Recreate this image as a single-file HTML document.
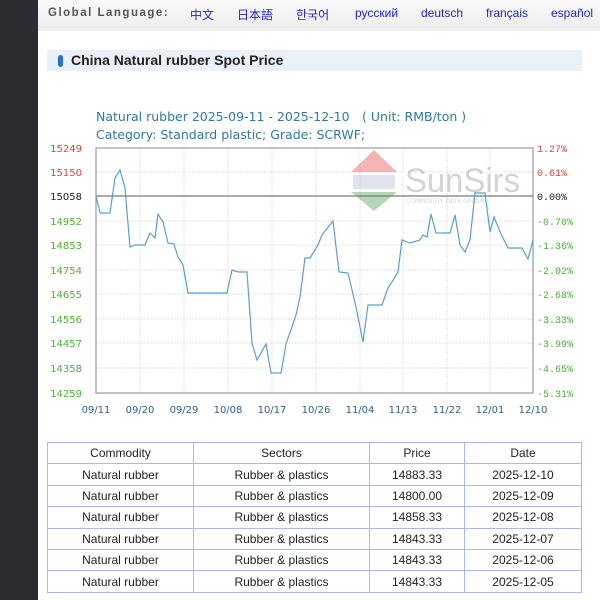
<!DOCTYPE html>
<html><head><meta charset="utf-8"><style>
*{margin:0;padding:0;box-sizing:border-box}
body{width:600px;height:600px;overflow:hidden;background:#fff;font-family:"Liberation Sans","Noto Sans CJK SC",sans-serif;position:relative}
.side{position:absolute;left:0;top:0;width:38px;height:600px;background:#2c2d33}
.top{position:absolute;left:38px;top:0;width:562px;height:31px;background:linear-gradient(#fafafa,#ececec);font-size:12px}
.top span{position:absolute;top:6px;color:#2323c8}
.top .gl{color:#555;font-weight:bold;letter-spacing:1.5px;font-size:11.5px;top:7px}
.title{position:absolute;left:47px;top:50px;width:535px;height:21px;background:#e9f0f8;font-weight:bold;font-size:14px;color:#222;padding:2px 0 0 24px}
.title i{position:absolute;left:11px;top:5px;width:5px;height:12px;border-radius:3px;background:#2a6fd8}
table{position:absolute;left:47px;top:442px;width:535px;border-collapse:collapse;font-size:12px;color:#222}
td{border:1.5px solid #aab8f0;height:21.4px;text-align:center;padding:0}
</style></head><body>
<div class="side"></div>
<div class="top">
<span class="gl" style="left:10px">Global Language:</span>
<span style="left:152px">中文</span><span style="left:199px">日本語</span><span style="left:258px">한국어</span>
<span style="left:317px">русский</span><span style="left:383px">deutsch</span><span style="left:448px">français</span><span style="left:513px">español</span>
</div>
<div class="title"><i></i>China Natural rubber Spot Price</div>
<svg style="position:absolute;left:0;top:0" width="600" height="440" font-family="DejaVu Sans,sans-serif">
<text x="96" y="121" font-size="12.5" fill="#2f7aa0">Natural rubber 2025-09-11 - 2025-12-10　( Unit: RMB/ton )</text>
<text x="96" y="139" font-size="12.5" fill="#2f7aa0">Category: Standard plastic; Grade: SCRWF;</text>
<g stroke="#e2e2e2" stroke-dasharray="2,1">
<path d="M96 172H533M96 221H533M96 245H533M96 270H533M96 294H533M96 319H533M96 343H533M96 368H533"/>
<path d="M140 148V393M184 148V393M228 148V393M272 148V393M316 148V393M360 148V393M403 148V393M447 148V393M490 148V393"/>
</g>
<g opacity="0.45">
<path d="M351 172L374 150L397 172Z" fill="#e85a5a"/>
<path d="M351 192L374 211L397 192Z" fill="#5aa85a"/>
<rect x="353" y="175" width="42" height="14" fill="#c0c4d8"/>
<text x="405" y="192" font-size="34" fill="#9aa0b0" font-family="Liberation Sans,sans-serif" textLength="115" lengthAdjust="spacingAndGlyphs">SunSirs</text>
<text x="406" y="203" font-size="6" fill="#9aa0b0">COMMODITY DATA GROUP</text>
</g>
<rect x="96" y="148" width="437" height="245" fill="none" stroke="#999" stroke-width="1.2"/>
<path d="M96 196H533" stroke="#777" stroke-width="1.2"/>
<polyline fill="none" stroke="#5a9fd0" stroke-width="1.2" points="96,196 100,213 110,213 115,178 120,170 125,188 130,247 135,245 145,245 150,233 155,238 158,214 163,222 168,243 174,244 178,257 183,265 188,293 227,293 232,270 238,272 247,272 252,343 257,360 266,344 271,373 281,373 286,344 296,315 300,297 305,258 310,258 318,245 322,235 333,221 339,272 348,273 356,307 363,342 368,305 382,305 388,288 392,282 398,272 402,240 410,243 420,240 423,235 427,237 431,214 436,233 450,233 455,215 460,245 465,252 470,240 475,193 485,193 490,232 494,217 501,234 508,248 522,248 528,259 533,240"/>
<g font-size="10" text-anchor="end">
<text x="82" y="152" fill="#e84040">15249</text><text x="82" y="176" fill="#e84040">15150</text><text x="82" y="200" fill="#222">15058</text>
<g fill="#4caf3a"><text x="82" y="225">14952</text><text x="82" y="249">14853</text><text x="82" y="274">14754</text><text x="82" y="298">14655</text><text x="82" y="323">14556</text><text x="82" y="347">14457</text><text x="82" y="372">14358</text><text x="82" y="397">14259</text></g>
</g>
<g font-size="10" font-family="Liberation Mono,monospace">
<text x="537" y="152" fill="#e84040">1.27%</text><text x="537" y="176" fill="#e84040">0.61%</text><text x="537" y="200" fill="#222">0.00%</text>
<g fill="#4caf3a"><text x="537" y="225">-0.70%</text><text x="537" y="249">-1.36%</text><text x="537" y="274">-2.02%</text><text x="537" y="298">-2.68%</text><text x="537" y="323">-3.33%</text><text x="537" y="347">-3.99%</text><text x="537" y="372">-4.65%</text><text x="537" y="397">-5.31%</text></g>
</g>
<g font-size="10" fill="#2a5f90" text-anchor="middle">
<text x="96" y="413">09/11</text><text x="140" y="413">09/20</text><text x="184" y="413">09/29</text><text x="228" y="413">10/08</text><text x="272" y="413">10/17</text><text x="316" y="413">10/26</text><text x="360" y="413">11/04</text><text x="403" y="413">11/13</text><text x="447" y="413">11/22</text><text x="490" y="413">12/01</text><text x="533" y="413">12/10</text>
</g>
</svg>
<table>
<tr><td style="width:146px">Commodity</td><td style="width:176px">Sectors</td><td style="width:95px">Price</td><td>Date</td></tr>
<tr><td>Natural rubber</td><td>Rubber &amp; plastics</td><td>14883.33</td><td>2025-12-10</td></tr>
<tr><td>Natural rubber</td><td>Rubber &amp; plastics</td><td>14800.00</td><td>2025-12-09</td></tr>
<tr><td>Natural rubber</td><td>Rubber &amp; plastics</td><td>14858.33</td><td>2025-12-08</td></tr>
<tr><td>Natural rubber</td><td>Rubber &amp; plastics</td><td>14843.33</td><td>2025-12-07</td></tr>
<tr><td>Natural rubber</td><td>Rubber &amp; plastics</td><td>14843.33</td><td>2025-12-06</td></tr>
<tr><td>Natural rubber</td><td>Rubber &amp; plastics</td><td>14843.33</td><td>2025-12-05</td></tr>
</table>
</body></html>
